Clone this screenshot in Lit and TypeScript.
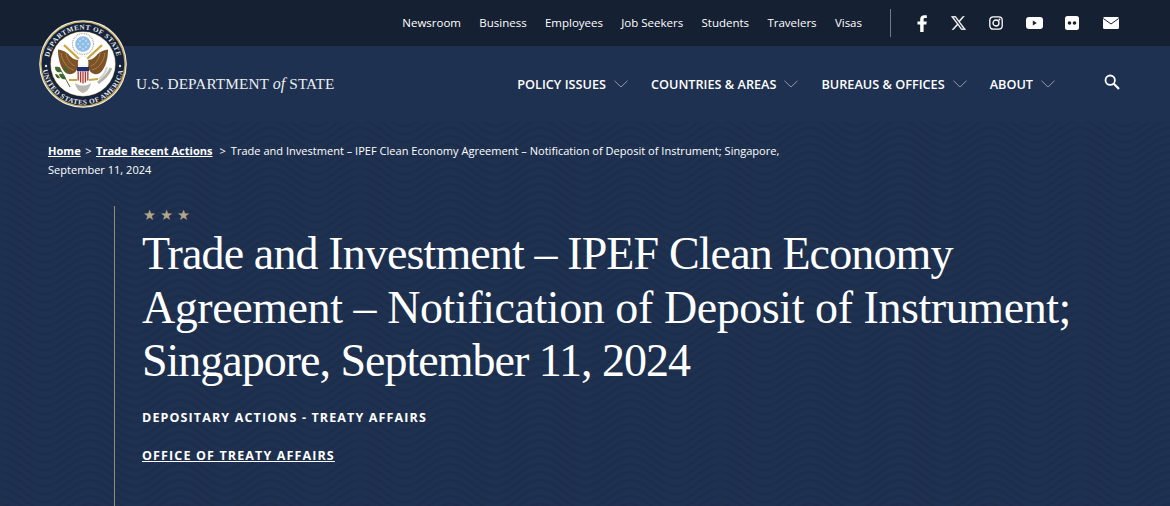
import { LitElement, html, css, svg, unsafeCSS } from "lit";
import { customElement } from "lit/decorators.js";

const waveLines = Array.from({ length: 8 }, (_, i) => -24 + i * 8)
  .map((y) => `<path d="M0 ${y}C15 ${y} 30 ${y + 22} 45 ${y + 22}S75 ${y} 90 ${y}"/>`)
  .join("");
const wave = encodeURIComponent(
  `<svg xmlns="http://www.w3.org/2000/svg" width="90" height="8" viewBox="0 0 90 8"><g fill="none" stroke="#1a2b47" stroke-opacity=".4" stroke-width="3">${waveLines}</g></svg>`
);

const chevron = html`<svg class="chev" width="14" height="8" viewBox="0 0 14 8"><path d="M.5.8 7 7 13.5.8" fill="none" stroke="#8e9aaa" stroke-width="1"/></svg>`;

const seal = html`<svg class="seal" width="88" height="88" viewBox="0 0 88 88">
  <defs>
    <path id="arcTop" d="M9.500 44a34.500 34.500 0 0 1 69 0"/>
    <path id="arcBot" d="M3.500 44a40.500 40.500 0 0 0 81 0"/>
  </defs>
  <circle cx="44" cy="44" r="43.8" fill="#f4f1e4"/>
  <circle cx="44" cy="44" r="42.8" fill="#c6ad62"/>
  <circle cx="44" cy="44" r="41.4" fill="#16233f"/>
  <circle cx="44" cy="44" r="32.6" fill="#c9b36f"/>
  <circle cx="44" cy="44" r="32" fill="#fff"/>
  <text class="sealtxt"><textPath href="#arcTop" startOffset="50%" text-anchor="middle">DEPARTMENT OF STATE</textPath></text>
  <text class="sealtxt"><textPath href="#arcBot" startOffset="50%" text-anchor="middle">UNITED STATES OF AMERICA</textPath></text>
  <circle cx="7" cy="46" r="1.200" fill="#e8e6dc"/>
  <circle cx="81" cy="46" r="1.200" fill="#e8e6dc"/>
  <circle cx="44" cy="24" r="10.500" fill="#fff" stroke="#a9a9a0" stroke-width="1.200" stroke-dasharray="1 .8"/>
  <circle cx="44" cy="24" r="7.800" fill="#8fbde6"/>
  <g fill="#fff">
    ${[[44, 19], [41, 21], [47, 21], [39, 24], [44, 24], [49, 24], [41, 27], [47, 27], [44, 29]].map(
      ([x, y]) => svg`<circle cx="${x}" cy="${y}" r=".7"/>`
    )}
  </g>
  <path d="M39 45C39 53 31 57 26 52 21 47 19 38 19 29.500 24 30 28 32 31 36 34 39 37 40 39 40Z" fill="#7d5227"/>
  <path d="M49 45C49 53 57 57 62 52 67 47 69 38 69 29.500 64 30 60 32 57 36 54 39 51 40 49 40Z" fill="#7d5227"/>
  <path d="M22 33c1 7 5 15 13 17M27 33c1 6 4 11 9 13M66 33c-1 7-5 15-13 17M61 33c-1 6-4 11-9 13" stroke="#ab8450" stroke-width=".9" fill="none"/>
  <path d="M25 25l15 14M63 25 48 39" stroke="#c9a43c" stroke-width="2.200" fill="none"/>
  <path d="M39.500 46c-1-4 0-10 4.500-10s6 5 5 10Z" fill="#fff" stroke="#d5d5cd" stroke-width=".4"/>
  <path d="M38 47h12v4.500H38Z" fill="#1e2f73"/>
  <path d="M38 51.500h12v7c0 2-2.500 3.500-6 5-3.500-1.500-6-3-6-5Z" fill="#f3e9df"/>
  <path d="M39.200 51.500v9M41.600 51.500v11M44 51.500v12M46.400 51.500v11M48.800 51.500v9" stroke="#a83a3d" stroke-width="1.200"/>
  <path d="M20 47c3 5 6 11 11 20" stroke="#4a6b2c" stroke-width="1" fill="none"/>
  <path d="M16 47c4-1 6 1 6 5-4 1-6-1-6-5ZM20 54c4-1 6 1 7 5-4 1-6-1-7-5ZM25 46c3 1 4 4 3 7-3-1-4-4-3-7ZM16 54c3 0 4 2 5 4-3 1-4-1-5-4Z" fill="#3e6a2e"/>
  <path d="M72 48c-2 5-6 10-13 15" stroke="#b3b3ab" stroke-width="3" fill="none"/>
  <path d="M68 47c-1 4-4 9-8 12" stroke="#d3d3cc" stroke-width="2" fill="none"/>
  <path d="M30 60h8M50 60l9-1" stroke="#c9a43c" stroke-width="2"/>
  <path d="M36 63c1 5 4 9 8 10 4-1 7-5 8-10-3 2-5 2.500-8 2.500S39 65 36 63Z" fill="#b9b9b2"/>
</svg>`;

const icons = [
  html`<svg width="12" height="17" viewBox="0 0 12 17"><path d="M3.200 17V9.500H.5V6.400h2.700V4.300C3.200 1.500 4.800.2 7.300.2c1.200 0 2.300.1 2.500.1v2.800H8.200c-1.300 0-1.600.7-1.600 1.600v1.700h3.200L9.300 9.500H6.600V17Z" fill="#fff"/></svg>`,
  html`<svg width="15" height="14" viewBox="0 0 15 14"><path d="M.2.300h4.500l3.300 4.500L11.900.3h1.500L8.700 5.800 14.800 13.700h-4.500L6.800 8.900 2.500 13.700H1L6.100 8ZM2.300 1.300l8.500 11.400h1.900L4.200 1.300Z" fill="#fff" stroke="#fff" stroke-width=".4"/></svg>`,
  html`<svg width="14" height="14" viewBox="0 0 14 14"><rect x=".8" y=".8" width="12.400" height="12.400" rx="3.400" fill="none" stroke="#fff" stroke-width="1.300"/><circle cx="7" cy="7" r="3" fill="none" stroke="#fff" stroke-width="1.300"/><circle cx="10.500" cy="3.500" r=".9" fill="#fff"/></svg>`,
  html`<svg width="17" height="12" viewBox="0 0 17 12"><rect width="17" height="12" rx="3" fill="#fff"/><path d="M6.800 3.600v4.800L10.800 6Z" fill="#152133"/></svg>`,
  html`<svg width="14" height="14" viewBox="0 0 14 14"><rect width="14" height="14" rx="2.500" fill="#fff"/><circle cx="4.500" cy="7" r="1.800" fill="#152133"/><circle cx="9.500" cy="7" r="1.800" fill="#152133"/></svg>`,
  html`<svg width="16" height="12" viewBox="0 0 16 12"><rect width="16" height="12" rx="1.500" fill="#fff"/><path d="M.3 1.500 8 7l7.700-5.500" fill="none" stroke="#152133" stroke-width="1"/></svg>`,
];

@customElement("app-root")
export class AppRoot extends LitElement {
  static styles = css`
    :host {
      display: block;
      width: 100%;
      height: 506px;
      overflow: hidden;
      background-color: #1e3150;
      background-image: url("data:image/svg+xml,${unsafeCSS(wave)}");
      color: #fff;
      font-family: "Open Sans", "Liberation Sans", sans-serif;
      position: relative;
    }
    .top {
      height: 46px;
      background: #152133;
      display: flex;
      align-items: center;
      justify-content: flex-end;
      padding-right: 40px;
      box-sizing: border-box;
    }
    .top a {
      color: #fff;
      font-size: 11.500px;
      margin-left: 18.300px;
      text-decoration: none;
      position: relative;
      top: -1px;
    }
    .divider {
      width: 1px;
      height: 28px;
      background: #6f7988;
      margin: 0 16px 0 28px;
    }
    .social {
      display: flex;
      align-items: center;
    }
    .social span {
      width: 38px;
      display: flex;
      justify-content: center;
    }
    .social span:first-child {
      width: 32px;
    }
    .social span:last-child {
      width: 39px;
    }
    .seal {
      position: absolute;
      left: 39px;
      top: 20px;
    }
    .sealtxt {
      font: 700 7px "Liberation Serif", serif;
      letter-spacing: 0.55px;
      fill: #ecebe3;
    }
    .nav {
      height: 76px;
      background: #1e3150;
      display: flex;
      align-items: center;
      padding: 0 50px 0 136px;
    }
    .brand {
      font: 15.300px "Liberation Serif", serif;
      color: #eceef1;
      letter-spacing: 0.1px;
      margin-right: auto;
      margin-top: -1px;
    }
    .brand i {
      font-size: 16px;
    }
    .item {
      display: flex;
      align-items: center;
      gap: 8px;
      font-size: 12.700px;
      font-weight: 600;
      margin-right: 23px;
    }
    .search {
      margin-left: 26px;
      display: flex;
      margin-top: -4px;
    }
    .crumb {
      margin: 20px 0 0 48px;
      font-size: 11.050px;
      line-height: 18.500px;
    }
    .crumb div {
      white-space: nowrap;
    }
    .crumb a {
      color: #fff;
      font-weight: 700;
      text-decoration: underline;
    }
    .s1 {
      margin: 0 4.500px;
    }
    .s2 {
      margin: 0 5px 0 7px;
    }
    .block {
      margin: 27px 0 0 114px;
      height: 300px;
      border-left: 1px solid #9a8b72;
      padding-left: 27px;
    }
    .stars {
      color: #b5a58a;
      font: 14.500px "DejaVu Sans", sans-serif;
      letter-spacing: 4px;
      line-height: 18px;
      padding: 0 0 0 1px;
    }
    h1 {
      margin: 3px 0 0;
      font: 400 46px/53.500px "Liberation Serif", serif;
      color: #fff;
    }
    h1 span {
      display: block;
      white-space: nowrap;
    }
    .l1 {
      letter-spacing: -0.880px;
    }
    .l2 {
      letter-spacing: -0.430px;
    }
    .l3 {
      letter-spacing: -1px;
    }
    .kicker {
      margin-top: 20px;
      font-size: 12.500px;
      font-weight: 700;
      letter-spacing: 1.130px;
      line-height: 20px;
    }
    .office {
      display: inline-block;
      margin-top: 18px;
      color: #fff;
      font-size: 12.500px;
      font-weight: 700;
      letter-spacing: 1.130px;
      line-height: 20px;
      text-decoration: underline;
    }
  `;

  render() {
    return html`
      <div class="top">
        ${["Newsroom", "Business", "Employees", "Job Seekers", "Students", "Travelers", "Visas"].map(
          (t) => html`<a href="#">${t}</a>`
        )}
        <div class="divider"></div>
        <div class="social">${icons.map((i) => html`<span>${i}</span>`)}</div>
      </div>
      ${seal}
      <div class="nav">
        <div class="brand">U.S. DEPARTMENT <i>of</i> STATE</div>
        ${["POLICY ISSUES", "COUNTRIES & AREAS", "BUREAUS & OFFICES", "ABOUT"].map(
          (t) => html`<div class="item">${t} ${chevron}</div>`
        )}
        <div class="search">
          <svg width="16" height="16" viewBox="0 0 16 16"><circle cx="6.200" cy="6.200" r="4.700" fill="none" stroke="#fff" stroke-width="1.800"/><path d="M9.800 9.800 15 15" stroke="#fff" stroke-width="2.200"/></svg>
        </div>
      </div>
      <div class="crumb">
        <div><a href="#">Home</a><span class="s1">&gt;</span><a href="#">Trade Recent Actions</a><span class="s2">&gt;</span><span>Trade and Investment – IPEF Clean Economy Agreement – Notification of Deposit of Instrument; Singapore,</span></div>
        <div>September 11, 2024</div>
      </div>
      <div class="block">
        <div class="stars">★★★</div>
        <h1>
          <span class="l1">Trade and Investment – IPEF Clean Economy</span>
          <span class="l2">Agreement – Notification of Deposit of Instrument;</span>
          <span class="l3">Singapore, September 11, 2024</span>
        </h1>
        <div class="kicker">DEPOSITARY ACTIONS - TREATY AFFAIRS</div>
        <a class="office" href="#">OFFICE OF TREATY AFFAIRS</a>
      </div>
    `;
  }
}
